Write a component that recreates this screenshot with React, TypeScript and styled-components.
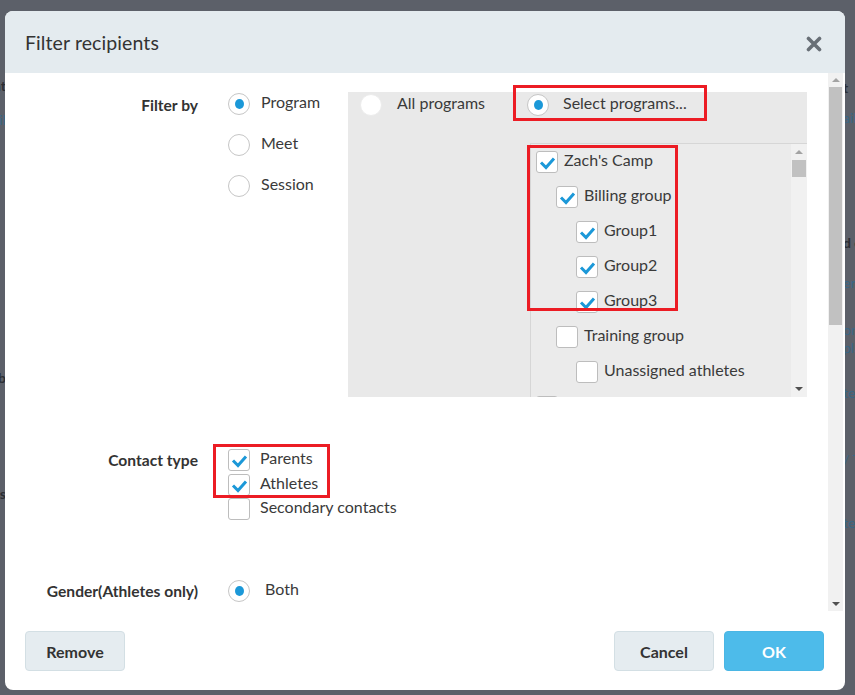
import React from "react";
import styled, { createGlobalStyle, css } from "styled-components";

const GlobalStyle = createGlobalStyle`
  html, body { margin: 0; padding: 0; background: #5c6069; }
  * { box-sizing: border-box; }
`;

const BLUE = "#1b98d8";

const Page = styled.div`
  position: relative;
  width: 855px;
  height: 695px;
  overflow: hidden;
  background: #5c6069;
  font-family: Lato, "Open Sans", "Liberation Sans", sans-serif;
`;

const BehindPage = styled.div`
  display: flex;
  justify-content: space-between;
  height: 100%;
`;

const PeekColumn = styled.div<{ $side: "left" | "right" }>`
  display: flex;
  flex-direction: column;
  width: ${(p) => (p.$side === "left" ? "40px" : "12px")};
  margin-left: ${(p) => (p.$side === "left" ? "-34px" : "0")};
  text-align: ${(p) => (p.$side === "left" ? "right" : "left")};
  white-space: nowrap;
  font-size: 14px;
  line-height: 18px;
`;

const PeekText = styled.div<{ $gap: number; $kind: "dark" | "blue" }>`
  margin-top: ${(p) => p.$gap}px;
  color: ${(p) => (p.$kind === "dark" ? "#2b2e34" : "#3a6786")};
  font-weight: ${(p) => (p.$kind === "dark" ? 700 : 400)};
`;

const Modal = styled.div`
  position: absolute;
  left: 5px;
  top: 11px;
  width: 840px;
  height: 679px;
  background: #fff;
  border-radius: 8px;
  overflow: hidden;
  display: flex;
  flex-direction: column;
`;

const Header = styled.div`
  flex: 0 0 62px;
  background: #e4ebef;
  display: flex;
  align-items: center;
  justify-content: space-between;
  padding: 0 23px 0 20px;
`;

const Title = styled.h2`
  margin: 0;
  font-size: 19.5px;
  font-weight: 400;
  color: #333;
  letter-spacing: 0.1px;
`;

const CloseButton = styled.button`
  width: 16px;
  height: 16px;
  padding: 0;
  border: 0;
  background: transparent;
  display: flex;
  margin-top: 4px;
`;

const BodyRow = styled.div`
  flex: 1;
  min-height: 0;
  display: flex;
`;

const BodyContent = styled.div`
  flex: 1;
  overflow: hidden;
  padding-top: 19px;
  display: flex;
  flex-direction: column;
`;

const ScrollTrack = styled.div<{ $width: number; $btn: number; $inset: number }>`
  flex: 0 0 ${(p) => p.$width}px;
  background: #f1f1f1;
  display: flex;
  flex-direction: column;
  align-items: center;
  margin-right: ${(p) => p.$inset}px;
  > .btn {
    flex: 0 0 ${(p) => p.$btn}px;
    width: 100%;
    display: flex;
    align-items: center;
    justify-content: center;
  }
`;

const Thumb = styled.div<{ $height: number }>`
  width: calc(100% - 2px);
  height: ${(p) => p.$height}px;
  background: #c1c1c1;
`;

const Spacer = styled.div`
  flex: 1;
`;

const Arrow = styled.span<{ $dir: "up" | "down"; $dim?: boolean }>`
  width: 0;
  height: 0;
  border-left: 4px solid transparent;
  border-right: 4px solid transparent;
  ${(p) =>
    p.$dir === "up"
      ? css`border-bottom: 4px solid ${p.$dim ? "#a3a3a3" : "#505050"};`
      : css`border-top: 4px solid ${p.$dim ? "#a3a3a3" : "#505050"};`}
`;

const FormRow = styled.div<{ $gap: number }>`
  display: flex;
  align-items: flex-start;
  gap: 30px;
  margin-top: ${(p) => p.$gap}px;
  flex-shrink: 0;
`;

const FieldLabel = styled.div<{ $offset: number }>`
  width: 193px;
  text-align: right;
  font-weight: 700;
  font-size: 15.6px;
  line-height: 20px;
  color: #333;
  margin-top: ${(p) => p.$offset}px;
`;

const OptionColumn = styled.div<{ $gap: number; $width?: number; $pad?: number }>`
  position: relative;
  display: flex;
  flex-direction: column;
  gap: ${(p) => p.$gap}px;
  width: ${(p) => (p.$width ? `${p.$width}px` : "auto")};
  padding-top: ${(p) => p.$pad ?? 0}px;
  flex-shrink: 0;
`;

const Option = styled.label<{ $gap: number; $width?: number }>`
  display: flex;
  align-items: center;
  gap: ${(p) => p.$gap}px;
  font-size: 16px;
  color: #3a3a3a;
  line-height: 18px;
  white-space: nowrap;
  flex-shrink: 0;
  width: ${(p) => (p.$width ? `${p.$width}px` : "auto")};
`;

const OptionText = styled.span<{ $raise?: number }>`
  position: relative;
  top: ${(p) => -(p.$raise ?? 1)}px;
`;

const RadioCircle = styled.span<{ $faint?: boolean }>`
  flex: 0 0 22px;
  width: 22px;
  height: 22px;
  border-radius: 50%;
  background: #fff;
  border: 1px solid ${(p) => (p.$faint ? "#ececec" : "#c6c6c6")};
  display: flex;
  align-items: center;
  justify-content: center;
`;

const RadioDot = styled.span`
  width: 9px;
  height: 10px;
  border-radius: 50%;
  background: ${BLUE};
`;

const Box = styled.span`
  flex: 0 0 22px;
  width: 22px;
  height: 22px;
  border-radius: 3px;
  background: #fff;
  border: 1px solid #bdbdbd;
  display: flex;
`;

const Panel = styled.div`
  position: relative;
  flex-shrink: 0;
  width: 459px;
  height: 305px;
  background: #e9e9e9;
  padding: 2px 0 0 12px;
  display: flex;
  flex-direction: column;
`;

const PanelTop = styled.div`
  display: flex;
  align-items: center;
`;

const TreeBox = styled.div`
  margin-top: auto;
  align-self: flex-end;
  width: 277px;
  height: 254px;
  border: 1px solid #d6d6d6;
  border-bottom: 0;
  border-right: 0;
  background: #ebebeb;
  display: flex;
`;

const TreeList = styled.div`
  flex: 1;
  overflow: hidden;
  padding-top: 7px;
  display: flex;
  flex-direction: column;
  gap: 13px;
`;

const TreeItem = styled.label<{ $level: number }>`
  display: flex;
  align-items: center;
  gap: 6px;
  padding-left: ${(p) => 5 + p.$level * 20}px;
  font-size: 16px;
  color: #3a3a3a;
  line-height: 18px;
  white-space: nowrap;
  flex-shrink: 0;
`;

const Highlight = styled.div<{ $l: number; $t: number; $w: number; $h: number }>`
  position: absolute;
  left: ${(p) => p.$l}px;
  top: ${(p) => p.$t}px;
  width: ${(p) => p.$w}px;
  height: ${(p) => p.$h}px;
  border: 3px solid #ec1c24;
  pointer-events: none;
`;

const Footer = styled.div`
  flex: 0 0 79px;
  display: flex;
  align-items: flex-start;
  padding: 20px 21px 0 20px;
  gap: 10px;
`;

const Button = styled.button<{ $primary?: boolean }>`
  width: 100px;
  height: 40px;
  border-radius: 4px;
  font-family: Lato, "Open Sans", "Liberation Sans", sans-serif;
  font-weight: 700;
  font-size: 16px;
  cursor: pointer;
  ${(p) =>
    p.$primary
      ? css`
          background: #4dbbea;
          border: 1px solid #4ab6e4;
          color: #fff;
        `
      : css`
          background: #e5ecf0;
          border: 1px solid #d3dfe4;
          color: #333;
        `}
`;

const FooterGap = styled.div`
  flex: 1;
`;

const Check = () => (
  <svg width="20" height="20" viewBox="0 0 20 20">
    <path d="M4 10.5 L9 15.5 L17 6.5" fill="none" stroke={BLUE} strokeWidth="3" />
  </svg>
);

const CheckBox = ({ checked }: { checked: boolean }) => <Box>{checked ? <Check /> : null}</Box>;

const Radio = ({ checked, faint }: { checked: boolean; faint?: boolean }) => (
  <RadioCircle $faint={faint}>{checked ? <RadioDot /> : null}</RadioCircle>
);

const tree = [
  { label: "Zach's Camp", level: 0, checked: true },
  { label: "Billing group", level: 1, checked: true },
  { label: "Group1", level: 2, checked: true },
  { label: "Group2", level: 2, checked: true },
  { label: "Group3", level: 2, checked: true },
  { label: "Training group", level: 1, checked: false },
  { label: "Unassigned athletes", level: 2, checked: false },
  { label: "Summer Camp", level: 0, checked: false },
];

const rightPeek: { text: string; gap: number; kind: "dark" | "blue" }[] = [
  { text: "t", gap: 79, kind: "dark" },
  { text: "ail", gap: 12, kind: "blue" },
  { text: "d e", gap: 107, kind: "dark" },
  { text: "er", gap: 22, kind: "blue" },
  { text: "on", gap: 29, kind: "blue" },
  { text: "pla", gap: 0, kind: "blue" },
  { text: "te", gap: 27, kind: "blue" },
  { text: "/ T", gap: 49, kind: "blue" },
  { text: "te", gap: 45, kind: "blue" },
];

const leftPeek: { text: string; gap: number; kind: "dark" | "blue" }[] = [
  { text: "at", gap: 77, kind: "dark" },
  { text: "ail", gap: 16, kind: "blue" },
  { text: "Sub", gap: 240, kind: "dark" },
  { text: "ss", gap: 98, kind: "dark" },
];

export default function App() {
  return (
    <>
      <GlobalStyle />
      <Page>
        <BehindPage>
          <PeekColumn $side="left">
            {leftPeek.map((p, i) => (
              <PeekText key={i} $gap={p.gap} $kind={p.kind}>
                {p.text}
              </PeekText>
            ))}
          </PeekColumn>
          <PeekColumn $side="right">
            {rightPeek.map((p, i) => (
              <PeekText key={i} $gap={p.gap} $kind={p.kind}>
                {p.text}
              </PeekText>
            ))}
          </PeekColumn>
        </BehindPage>

        <Modal>
          <Header>
            <Title>Filter recipients</Title>
            <CloseButton aria-label="Close">
              <svg width="16" height="16" viewBox="0 0 16 16">
                <path d="M2.5 2.5 L13.5 13.5 M13.5 2.5 L2.5 13.5" stroke="#686f76" strokeWidth="3.6" strokeLinecap="round" />
              </svg>
            </CloseButton>
          </Header>

          <BodyRow>
            <BodyContent>
              <FormRow $gap={0}>
                <FieldLabel $offset={3}>Filter by</FieldLabel>
                <OptionColumn $gap={19} $width={90} $pad={1}>
                  <Option $gap={11}>
                    <Radio checked />
                    <OptionText $raise={2}>Program</OptionText>
                  </Option>
                  <Option $gap={11}>
                    <Radio checked={false} />
                    <OptionText $raise={2}>Meet</OptionText>
                  </Option>
                  <Option $gap={11}>
                    <Radio checked={false} />
                    <OptionText $raise={2}>Session</OptionText>
                  </Option>
                </OptionColumn>
                <Panel>
                  <PanelTop>
                    <Option $gap={15} $width={167}>
                      <Radio checked={false} faint />
                      <OptionText $raise={2}>All programs</OptionText>
                    </Option>
                    <Option $gap={14}>
                      <Radio checked />
                      <OptionText $raise={2}>Select programs...</OptionText>
                    </Option>
                  </PanelTop>
                  <TreeBox>
                    <TreeList>
                      {tree.map((t) => (
                        <TreeItem key={t.label} $level={t.level}>
                          <CheckBox checked={t.checked} />
                          <OptionText $raise={2}>{t.label}</OptionText>
                        </TreeItem>
                      ))}
                    </TreeList>
                    <ScrollTrack $width={16} $btn={16} $inset={0}>
                      <div className="btn">
                        <Arrow $dir="up" $dim />
                      </div>
                      <Thumb $height={17} />
                      <Spacer />
                      <div className="btn">
                        <Arrow $dir="down" />
                      </div>
                    </ScrollTrack>
                  </TreeBox>
                  <Highlight $l={165} $t={-7} $w={194} $h={36} />
                  <Highlight $l={179} $t={53} $w={151} $h={166} />
                </Panel>
              </FormRow>

              <FormRow $gap={52}>
                <FieldLabel $offset={1}>Contact type</FieldLabel>
                <OptionColumn $gap={2.5}>
                  <Option $gap={10}>
                    <CheckBox checked />
                    <OptionText $raise={2}>Parents</OptionText>
                  </Option>
                  <Option $gap={10}>
                    <CheckBox checked />
                    <OptionText $raise={2}>Athletes</OptionText>
                  </Option>
                  <Option $gap={10}>
                    <CheckBox checked={false} />
                    <OptionText $raise={2}>Secondary contacts</OptionText>
                  </Option>
                  <Highlight $l={-15} $t={-5} $w={117} $h={54} />
                </OptionColumn>
              </FormRow>

              <FormRow $gap={60}>
                <FieldLabel $offset={1}>Gender(Athletes only)</FieldLabel>
                <OptionColumn $gap={19}>
                  <Option $gap={15}>
                    <Radio checked />
                    <OptionText $raise={2}>Both</OptionText>
                  </Option>
                  <Option $gap={15}>
                    <Radio checked={false} />
                    <OptionText $raise={2}>Male</OptionText>
                  </Option>
                </OptionColumn>
              </FormRow>
            </BodyContent>
            <ScrollTrack $width={15} $btn={14} $inset={2}>
              <div className="btn">
                <Arrow $dir="up" $dim />
              </div>
              <Thumb $height={238} />
              <Spacer />
              <div className="btn">
                <Arrow $dir="down" />
              </div>
            </ScrollTrack>
          </BodyRow>

          <Footer>
            <Button>Remove</Button>
            <FooterGap />
            <Button>Cancel</Button>
            <Button $primary>OK</Button>
          </Footer>
        </Modal>
      </Page>
    </>
  );
}
